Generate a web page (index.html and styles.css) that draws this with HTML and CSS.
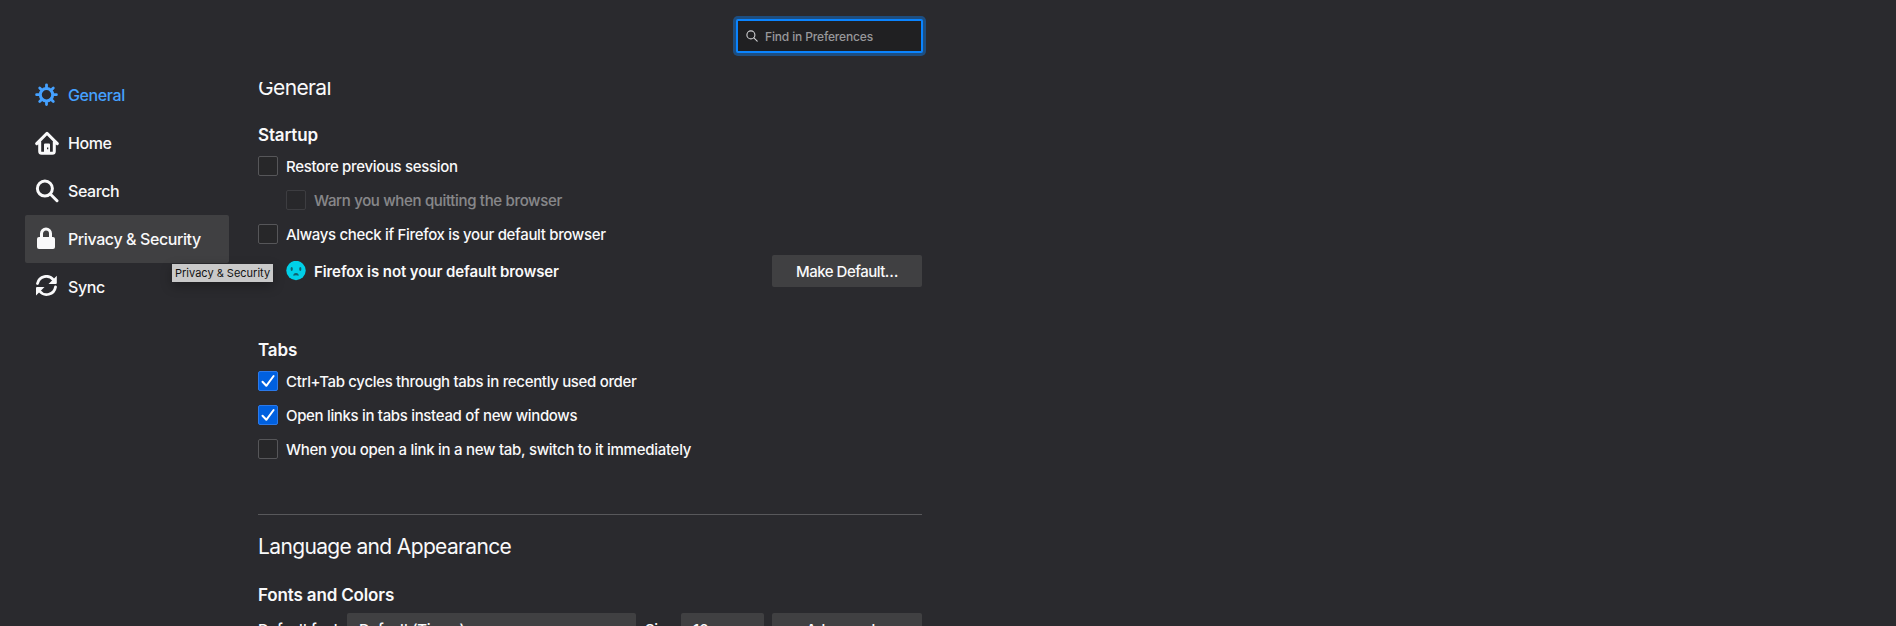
FILE: index.html
```html
<!DOCTYPE html>
<html lang="en">
<head>
<meta charset="utf-8">
<title>Preferences</title>
<link rel="stylesheet" href="styles.css">
</head>
<body>
<div class="page">
  <nav class="sidebar">
    <a class="nav-item selected">
      <svg class="nav-icon" viewBox="0 0 24 24"><g fill="none" stroke="currentColor" stroke-linecap="round"><circle cx="11.500" cy="11.700" r="6.200" stroke-width="3"/><path stroke-width="2.800" d="M11.500 4.200V1.800M11.500 19.200v2.400M4 11.700H1.600M19 11.700h2.400M6.200 6.400L4.700 4.900M16.800 6.400l1.500-1.500M6.200 17l-1.500 1.500M16.800 17l1.500 1.500"/></g></svg>
      <span>General</span>
    </a>
    <a class="nav-item">
      <svg class="nav-icon" viewBox="0 0 24 24"><path fill="none" stroke="currentColor" stroke-width="3" stroke-linecap="round" stroke-linejoin="round" d="M1.700 12.600L12 2.300l10.300 10.300M4.700 11v9.200q0 2 2 2h10.600q2 0 2-2V11"/><path fill="currentColor" fill-rule="evenodd" d="M9 22v-8.500q0-1 1-1h4q1 0 1 1V22zM12 16.500v1.800h1.300v-1.800z"/></svg>
      <span>Home</span>
    </a>
    <a class="nav-item">
      <svg class="nav-icon" viewBox="0 0 24 24"><g fill="none" stroke="currentColor" stroke-width="3" stroke-linecap="round"><circle cx="9.900" cy="9.600" r="7.500"/><path d="M15.500 15.200l6.500 6.500"/></g></svg>
      <span>Search</span>
    </a>
    <a class="nav-item hovered">
      <svg class="nav-icon" viewBox="0 0 24 24"><path fill="none" stroke="currentColor" stroke-width="3" d="M6.500 11V6.500a4.500 4.500 0 0 1 9 0V11"/><rect x="2" y="10" width="18" height="12" rx="2" fill="currentColor"/></svg>
      <span>Privacy &amp; Security</span>
    </a>
    <a class="nav-item">
      <svg class="nav-icon" viewBox="0 1 24 24"><g fill="none" stroke="currentColor" stroke-width="2.800" stroke-linecap="round"><path d="M2.500 9.500A9 9 0 0 1 18.500 6M20.500 13A9 9 0 0 1 4.500 17"/></g><path fill="currentColor" d="M21.800 1.800v7.200q0 1-1 1h-7.300zM1 21.500v-7.500q0-1 1-1h7.500z"/></svg>
      <span>Sync</span>
    </a>
  </nav>
  <main class="main">
    <header class="toolbar">
      <div class="search">
        <svg class="search-icon" viewBox="0 0 12 12"><g fill="none" stroke="currentColor" stroke-width="1.100" stroke-linecap="round"><circle cx="4.900" cy="4.900" r="4"/><path d="M7.900 7.900l3.300 3.300"/></g></svg>
        <span>Find in Preferences</span>
      </div>
    </header>
    <div class="content">
      <h1 class="title title-general">General</h1>

      <section class="startup">
        <h2 class="subtitle">Startup</h2>
        <div class="row"><span class="check"></span><span class="label">Restore previous session</span></div>
        <div class="row indent disabled"><span class="check"></span><span class="label">Warn you when quitting the browser</span></div>
        <div class="row"><span class="check"></span><span class="label">Always check if Firefox is your default browser</span></div>
        <div class="default-row">
          <svg class="face" viewBox="0 0 20 20"><circle cx="10" cy="9.500" r="9.700" fill="#00d0e8"/><g fill="#10606f"><ellipse cx="5.700" cy="8" rx="1.100" ry="2.100"/><ellipse cx="14.300" cy="8" rx="1.100" ry="2.100"/><path d="M7.300 14.800q0-2.700 2.700-2.700t2.700 2.700q-2.700-1.200-5.400 0z"/></g></svg>
          <span class="label strong">Firefox is not your default browser</span>
          <span class="button">Make Default…</span>
        </div>
      </section>

      <section class="tabs">
        <h2 class="subtitle">Tabs</h2>
        <div class="row"><span class="check on"><svg viewBox="0 0 18 18"><path d="M3.500 9.800l3.800 4L14.600 4"/></svg></span><span class="label">Ctrl+Tab cycles through tabs in recently used order</span></div>
        <div class="row"><span class="check on"><svg viewBox="0 0 18 18"><path d="M3.500 9.800l3.800 4L14.600 4"/></svg></span><span class="label">Open links in tabs instead of new windows</span></div>
        <div class="row"><span class="check"></span><span class="label long">When you open a link in a new tab, switch to it immediately</span></div>
      </section>

      <h1 class="title title-language">Language and Appearance</h1>
      <section class="fonts">
        <h2 class="subtitle">Fonts and Colors</h2>
        <div class="font-row">
          <span class="font-label">Default font</span>
          <span class="select select-font">Default (Times)</span>
          <span class="size-label">Size</span>
          <span class="select select-size">16</span>
          <span class="button">Advanced…</span>
        </div>
      </section>
    </div>
  </main>
</div>
<div class="tooltip">Privacy &amp; Security</div>
</body>
</html>
```
FILE: styles.css
```css
* { box-sizing: border-box; }
body {
  margin: 0;
  height: 626px;
  overflow: hidden;
  background: #2a2a2e;
  color: #f9f9fa;
  font-family: Inter, "Noto Sans", sans-serif;
  font-size: 15px;
  font-weight: 450;
  letter-spacing: -0.33px;
}
.page { display: flex; height: 626px; overflow: hidden; }
.sidebar { flex: none; width: 258px; padding: 71px 29px 0 25px; }
.nav-item {
  display: flex;
  align-items: center;
  height: 48px;
  padding-left: 10px;
  border-radius: 2px;
  font-size: 16px;
  letter-spacing: -0.4px;
  white-space: nowrap;
}
.nav-item.selected { color: #45a1ff; }
.nav-item.hovered { background: #404042; }
.nav-icon { flex: none; width: 24px; height: 24px; margin-right: 9px; }
.main { display: flex; flex-direction: column; width: 664px; height: 626px; }
.toolbar { flex: none; display: flex; justify-content: flex-end; height: 82px; padding-top: 19px; }
.search {
  display: flex;
  align-items: center;
  width: 187px;
  height: 34px;
  padding-left: 8px;
  margin-right: -1px;
  border: 2px solid #0a84ff;
  border-radius: 2px;
  background: #202022;
  box-shadow: 0 0 0 3px rgba(10, 132, 255, 0.4);
  color: #98989b;
  font-size: 12px;
  letter-spacing: -0.15px;
}
.search-icon { width: 12px; height: 12px; margin-right: 7px; color: #d0d0d2; }
.content { flex: 1; min-height: 0; overflow: hidden; white-space: nowrap; }
.title { margin: 0; font-size: 21px; font-weight: 400; line-height: 31px; letter-spacing: -0.64px; }
.title-general { margin-top: -10px; }
.title-language { margin-top: 55px; padding-top: 16px; border-top: 1px solid #58585b; }
.subtitle { margin: 0; font-size: 17px; font-weight: 600; line-height: 24px; letter-spacing: -0.15px; }
.startup { padding-top: 20px; }
.row { display: flex; align-items: center; height: 20px; margin-bottom: 14px; }
.subtitle + .row { margin-top: 9px; }
.indent { padding-left: 28px; }
.disabled { opacity: 0.45; }
.check {
  flex: none;
  width: 20px;
  height: 20px;
  margin-right: 8px;
  border: 1px solid #565659;
  border-radius: 2px;
  background: #272729;
}
.check.on { border-color: #2b79ea; background: #0060df; }
.check svg { display: block; width: 18px; height: 18px; fill: none; stroke: #fff; stroke-width: 2; stroke-linecap: round; stroke-linejoin: round; }
.label { padding-top: 2px; line-height: 20px; }
.long { letter-spacing: -0.28px; }
.strong { font-weight: 600; letter-spacing: -0.09px; }
.default-row { display: flex; align-items: center; height: 32px; margin-top: -3px; padding-left: 28px; }
.face { width: 20px; height: 20px; margin-right: 8px; }
.button {
  display: flex;
  align-items: center;
  justify-content: center;
  width: 150px;
  height: 32px;
  margin-left: auto;
  border-radius: 2px;
  background: #404042;
  letter-spacing: -0.5px;
}
.tabs { padding-top: 51px; }
.fonts { padding-top: 21px; }
.font-row { display: flex; align-items: center; margin-top: 6px; }
.font-label { width: 89px; }
.select { display: flex; align-items: center; height: 32px; padding-left: 12px; border-radius: 2px; background: #404042; }
.select-font { width: 289px; }
.size-label { width: 45px; padding-left: 9px; }
.select-size { width: 83px; }
.tooltip {
  position: absolute;
  left: 172px;
  top: 264px;
  width: 101px;
  height: 18px;
  padding-left: 3px;
  background: #c9c9c9;
  color: #111;
  font-size: 11px;
  font-weight: 400;
  letter-spacing: 0;
  line-height: 18px;
  white-space: nowrap;
  box-shadow: 0 4px 12px rgba(0, 0, 0, 0.3);
}
```
